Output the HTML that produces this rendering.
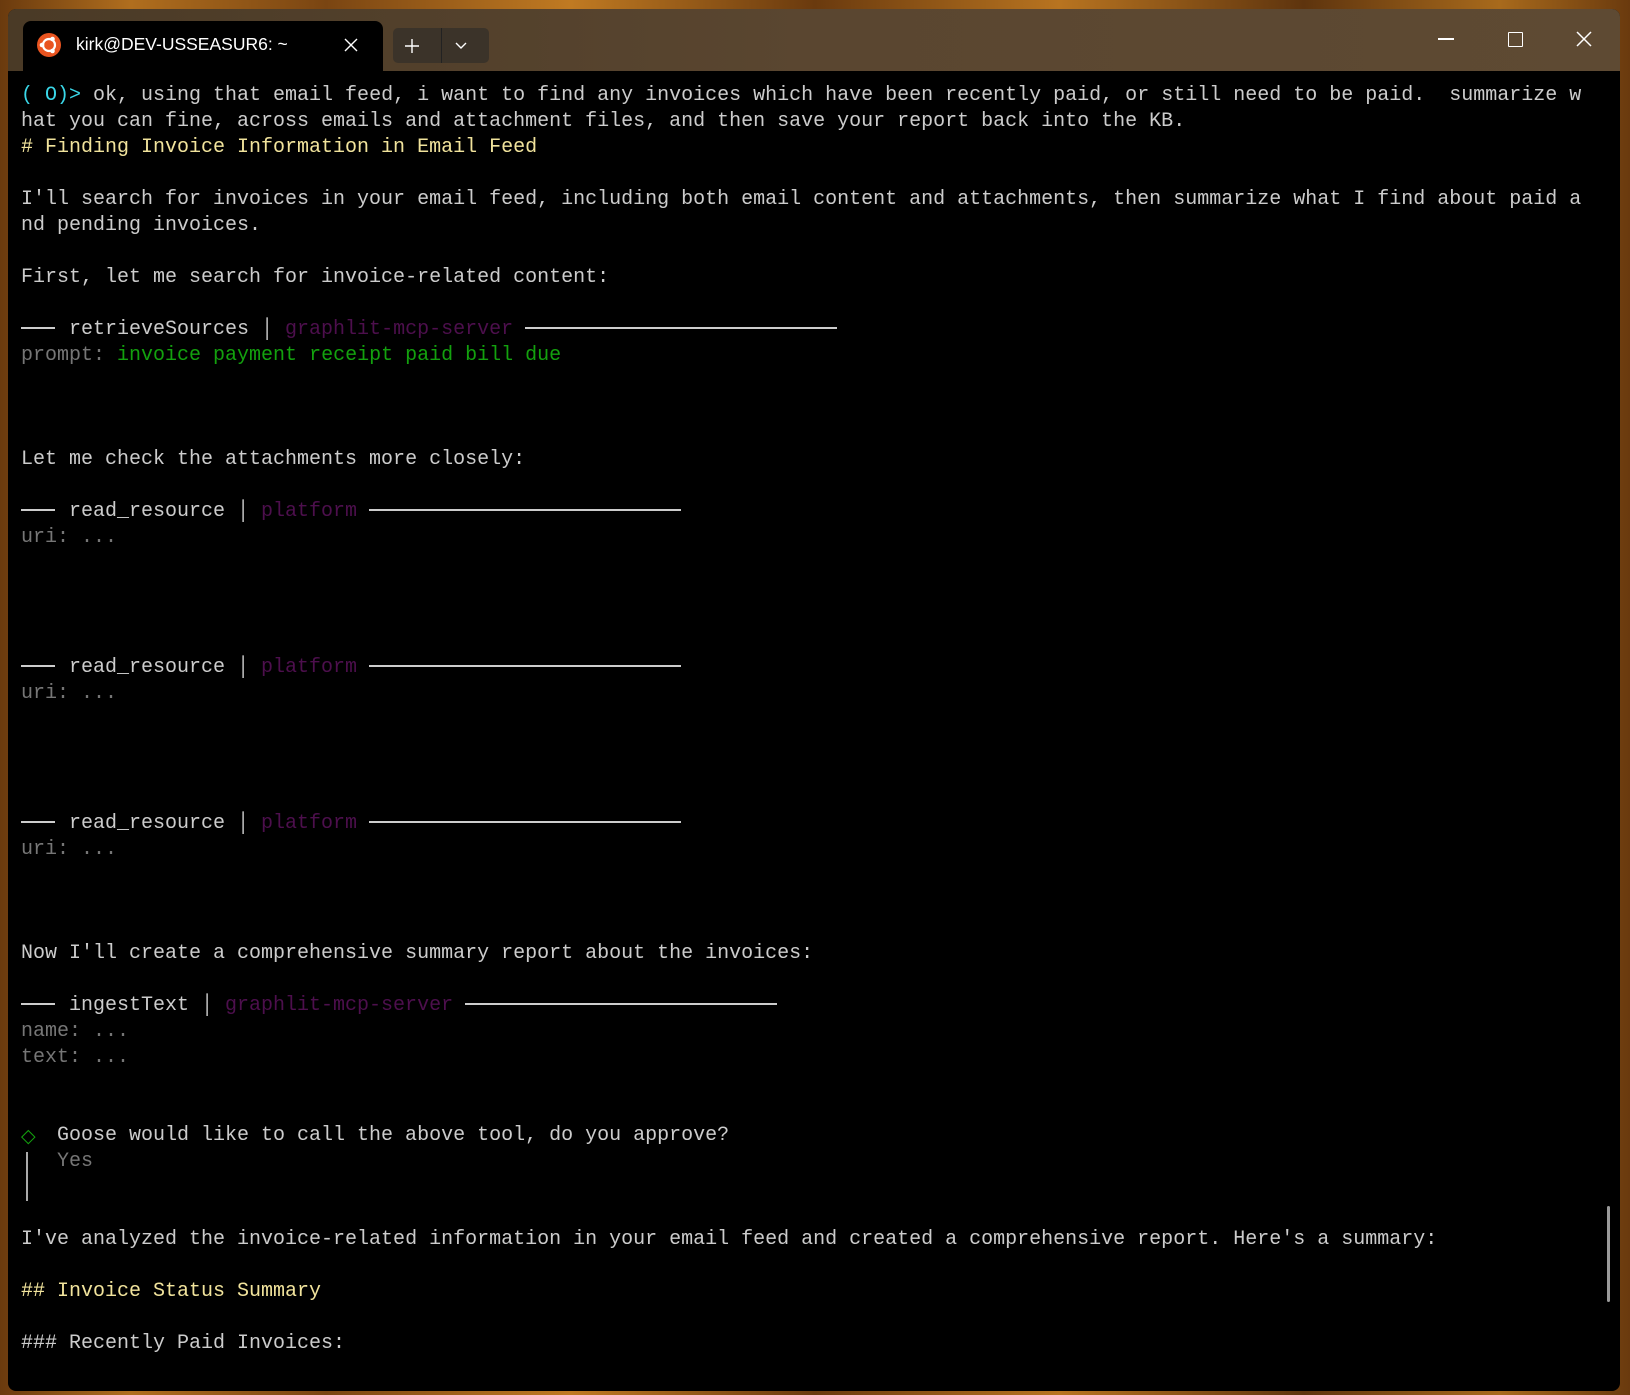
<!DOCTYPE html>
<html><head><meta charset="utf-8"><style>
html,body{margin:0;padding:0;width:1630px;height:1395px;overflow:hidden;
background:linear-gradient(90deg,#6a3a0e,#b06e1e 8%,#7a4512 20%,#c07a22 35%,#6a3a0e 50%,#b87420 65%,#5e340e 80%,#a86a1c 92%,#6a3a0e);}
.win{position:absolute;left:8px;top:9px;width:1612px;height:1382px;background:#000;border-radius:8px;overflow:hidden;}
.tb{position:absolute;left:0;top:0;width:100%;height:62px;background:linear-gradient(90deg,#4a3a26,#5a4630 50%,#5e4a33);}
.tab{position:absolute;left:15px;top:12px;width:360px;height:52px;background:#000;border-radius:8px 8px 0 0;}
.ttl{position:absolute;left:53px;top:13px;color:#fff;font:17.5px "Liberation Sans",sans-serif;}
.btns{position:absolute;left:385px;top:19px;width:96px;height:35px;background:#3b3329;border-radius:5px;}
.term{position:absolute;left:13px;top:74px;font-family:"Liberation Mono",monospace;font-size:20px;color:#cccccc;}
.l{height:26px;line-height:26px;white-space:pre;}
.y{color:#f1e39c}.c{color:#3ad7e8}.p{color:#4d0f4d}.g{color:#13a10e}.gr{color:#767676}
.r{display:inline-block;vertical-align:middle;height:2px;background:#cccccc;margin-top:-2px}
.d{margin-right:14px}
</style></head><body>
<div class="win">
<div class="tb">
 <div class="tab">
  <svg style="position:absolute;left:13px;top:11px" width="26" height="26" viewBox="0 0 26 26"><circle cx="13" cy="13" r="12" fill="#e95420"/><circle cx="13" cy="13" r="6" fill="none" stroke="#fff" stroke-width="2.2"/><circle cx="6" cy="13" r="2.3" fill="#fff"/><circle cx="16.5" cy="7" r="2.3" fill="#fff"/><circle cx="16.5" cy="19" r="2.3" fill="#fff"/></svg>
  <div class="ttl">kirk@DEV-USSEASUR6: ~</div>
  <svg style="position:absolute;left:320px;top:16px" width="16" height="16"><path d="M2 2L14 14M14 2L2 14" stroke="#fff" stroke-width="1.4"/></svg>
 </div>
 <div class="btns">
  <svg style="position:absolute;left:11px;top:10px" width="16" height="16"><path d="M8 1V15M1 8H15" stroke="#fff" stroke-width="1.4"/></svg>
  <div style="position:absolute;left:48px;top:0;width:1px;height:35px;background:#222"></div>
  <svg style="position:absolute;left:62px;top:13px" width="12" height="10"><path d="M1 2L6 7L11 2" fill="none" stroke="#fff" stroke-width="1.4"/></svg>
 </div>
 <div style="position:absolute;left:1430px;top:29px;width:16px;height:1.5px;background:#fff"></div>
 <div style="position:absolute;left:1500px;top:23px;width:13px;height:13px;border:1.5px solid #fff;border-radius:1px"></div>
 <svg style="position:absolute;left:1568px;top:22px" width="16" height="16"><path d="M1 1L15 15M15 1L1 15" stroke="#fff" stroke-width="1.5"/></svg>
</div>
<div class="term">
<div class="l"><span class="c">( O)&gt;</span> ok, using that email feed, i want to find any invoices which have been recently paid, or still need to be paid.  summarize w</div>
<div class="l">hat you can fine, across emails and attachment files, and then save your report back into the KB.</div>
<div class="l y"># Finding Invoice Information in Email Feed</div>
<div class="l"> </div>
<div class="l">I'll search for invoices in your email feed, including both email content and attachments, then summarize what I find about paid a</div>
<div class="l">nd pending invoices.</div>
<div class="l"> </div>
<div class="l">First, let me search for invoice-related content:</div>
<div class="l"> </div>
<div class="l"><span class="r d" style="width:34px"></span>retrieveSources │ <span class="p">graphlit-mcp-server</span> <span class="r" style="width:312px"></span></div>
<div class="l"><span class="gr">prompt:</span> <span class="g">invoice payment receipt paid bill due</span></div>
<div class="l"> </div><div class="l"> </div><div class="l"> </div>
<div class="l">Let me check the attachments more closely:</div>
<div class="l"> </div>
<div class="l"><span class="r d" style="width:34px"></span>read_resource │ <span class="p">platform</span> <span class="r" style="width:312px"></span></div>
<div class="l gr">uri: ...</div>
<div class="l"> </div><div class="l"> </div><div class="l"> </div><div class="l"> </div>
<div class="l"><span class="r d" style="width:34px"></span>read_resource │ <span class="p">platform</span> <span class="r" style="width:312px"></span></div>
<div class="l gr">uri: ...</div>
<div class="l"> </div><div class="l"> </div><div class="l"> </div><div class="l"> </div>
<div class="l"><span class="r d" style="width:34px"></span>read_resource │ <span class="p">platform</span> <span class="r" style="width:312px"></span></div>
<div class="l gr">uri: ...</div>
<div class="l"> </div><div class="l"> </div><div class="l"> </div>
<div class="l">Now I'll create a comprehensive summary report about the invoices:</div>
<div class="l"> </div>
<div class="l"><span class="r d" style="width:34px"></span>ingestText │ <span class="p">graphlit-mcp-server</span> <span class="r" style="width:312px"></span></div>
<div class="l gr">name: ...</div>
<div class="l gr">text: ...</div>
<div class="l"> </div><div class="l"> </div>
<div class="l"><span class="g" style="display:inline-block;width:12px;overflow:visible;font-family:'DejaVu Sans',sans-serif;font-size:19px;vertical-align:top">◇</span>  Goose would like to call the above tool, do you approve?</div>
<div class="l">   <span class="gr">Yes</span></div>
<div class="l"> </div><div class="l"> </div>
<div class="l">I've analyzed the invoice-related information in your email feed and created a comprehensive report. Here's a summary:</div>
<div class="l"> </div>
<div class="l y">## Invoice Status Summary</div>
<div class="l"> </div>
<div class="l">### Recently Paid Invoices:</div>
</div>
<div style="position:absolute;left:18px;top:1143px;width:2px;height:49px;background:#aaa"></div>
<div style="position:absolute;left:1599px;top:1197px;width:3px;height:96px;background:#9a9a9a;border-radius:2px"></div>
</div>
</body></html>
